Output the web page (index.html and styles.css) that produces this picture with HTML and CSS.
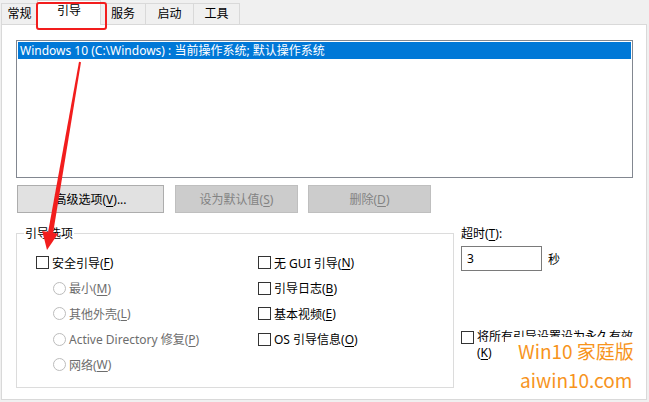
FILE: index.html
```html
<!DOCTYPE html>
<html lang="zh-CN">
<head>
<meta charset="UTF-8">
<title>系统配置 - 引导</title>
<link rel="stylesheet" href="styles.css">
</head>
<body>
<div class="tabs">
  <div class="tab tab-general">常规</div>
  <div class="tab tab-boot active">引导</div>
  <div class="tab tab-services">服务</div>
  <div class="tab tab-startup">启动</div>
  <div class="tab tab-tools">工具</div>
</div>

<div class="panel">
  <div class="os-list">
    <div class="os-item selected">Windows 10 (C:\Windows) : 当前操作系统; 默认操作系统</div>
  </div>

  <div class="buttons">
    <button class="btn btn-advanced">高级选项(<u>V</u>)...</button>
    <button class="btn btn-default" disabled>设为默认值(<u>S</u>)</button>
    <button class="btn btn-delete" disabled>删除(<u>D</u>)</button>
  </div>

  <div class="lower">
    <fieldset class="boot-options">
      <legend>引导选项</legend>
      <div class="options-grid">
        <label class="opt check-opt"><span class="box"></span>安全引导(<u>F</u>)</label>
        <label class="opt check-opt"><span class="box"></span>无 GUI 引导(<u>N</u>)</label>

        <label class="opt radio-opt"><span class="radio"></span>最小(<u>M</u>)</label>
        <label class="opt check-opt"><span class="box"></span>引导日志(<u>B</u>)</label>

        <label class="opt radio-opt"><span class="radio"></span>其他外壳(<u>L</u>)</label>
        <label class="opt check-opt"><span class="box"></span>基本视频(<u>E</u>)</label>

        <label class="opt radio-opt"><span class="radio"></span>Active Directory 修复(<u>P</u>)</label>
        <label class="opt check-opt"><span class="box"></span>OS 引导信息(<u>O</u>)</label>

        <label class="opt radio-opt"><span class="radio"></span>网络(<u>W</u>)</label>
      </div>
    </fieldset>

    <div class="side">
      <div class="timeout-label">超时(<u>T</u>):</div>
      <div class="timeout-row">
        <div class="timeout-input">3</div>
        <span class="unit">秒</span>
      </div>
      <label class="permanent"><span class="box"></span><span class="permanent-text">将所有引导设置设为永久有效(<u>K</u>)</span></label>
    </div>
  </div>
</div>

<!-- annotations on top of the screenshot -->
<div class="mark-box"></div>
<svg class="mark-arrow" width="649" height="402" viewBox="0 0 649 402">
  <polygon points="79,61.8 81,62.2 53,233.4 48,232.6" fill="#f21d1d"/>
  <polygon points="42.2,230.9 58,233.7 47,250" fill="#f21d1d"/>
</svg>

<div class="watermark">
  <div class="wm-title">Win10 家庭版</div>
  <div class="wm-site">aiwin10.com</div>
</div>
</body>
</html>
```

FILE: styles.css
```css
:root {
  --panel-border: #d9d9d9;
  --face: #f0f0f0;
  --text: #000;
  --disabled: #6d6d6d;
  --select: #0078d7;
  --mark: #f21d1d;
  --orange: #f7941d;
}

* {
  margin: 0;
  padding: 0;
  box-sizing: border-box;
}

body {
  width: 649px;
  height: 402px;
  overflow: hidden;
  background: var(--face);
  font-family: "Noto Sans", "Noto Sans CJK SC", sans-serif;
  font-size: 12px;
  color: var(--text);
}

u {
  text-decoration: underline;
  text-underline-offset: 2px;
}

/* tabs */
.tabs {
  display: flex;
  align-items: flex-end;
  height: 24px;
  padding-left: 1px;
}

.tab {
  height: 21px;
  line-height: 20px;
  border: 1px solid var(--panel-border);
  border-bottom: none;
  background: var(--face);
  text-align: center;
  margin-left: -1px;
}

.tab:first-child {
  margin-left: 0;
}

.tab-general { width: 37px; }
.tab-boot { width: 64px; }
.tab-services { width: 46px; }
.tab-startup { width: 49px; }
.tab-tools { width: 47px; }

.tab.active {
  position: relative;
  z-index: 1;
  height: 25px;
  line-height: 20px;
  margin-bottom: -1px;
  background: #fff;
}

/* tab page */
.panel {
  margin-left: 1px;
  width: 646px;
  height: 376px;
  background: #fff;
  border: 1px solid var(--panel-border);
}

.os-list {
  margin: 15px 0 0 14px;
  width: 617px;
  height: 138px;
  border: 1px solid #828790;
  padding: 1px;
}

.os-item {
  height: 17px;
  line-height: 17px;
  padding-left: 2px;
  white-space: nowrap;
}

.os-item.selected {
  background: var(--select);
  color: #fff;
}

.buttons {
  display: flex;
  margin-top: 7px;
  padding-left: 15px;
}

.btn {
  height: 28px;
  font: inherit;
  border: 1px solid #adadad;
  background: #e1e1e1;
  color: var(--text);
}

.btn:disabled {
  border-color: #bfbfbf;
  background: #cccccc;
  color: #838383;
}

.btn-advanced { width: 147px; }
.btn-default { width: 123px; margin-left: 11px; }
.btn-delete { width: 123px; margin-left: 10px; }

.lower {
  display: flex;
  margin-top: 12px;
}

/* boot options group */
.boot-options {
  margin-left: 14px;
  width: 438px;
  height: 163px;
  border: 1px solid #dcdcdc;
  padding: 8px 0 0 7px;
}

.boot-options legend {
  padding: 0 1px;
  line-height: 17px;
}

.options-grid {
  display: grid;
  grid-template-columns: 222px 1fr;
  grid-auto-rows: 25.5px;
  padding-left: 12px;
}

.opt {
  display: flex;
  align-items: center;
  white-space: nowrap;
}

.box {
  width: 13px;
  height: 13px;
  border: 1px solid #333;
  background: #fff;
  margin-right: 3px;
  flex: none;
}

.radio-opt {
  padding-left: 17px;
  color: var(--disabled);
}

.radio {
  width: 13px;
  height: 13px;
  border: 1px solid #bcbcbc;
  border-radius: 50%;
  margin-right: 3px;
  flex: none;
}

/* right side */
.side {
  margin-left: 7px;
}

.timeout-label {
  line-height: 17px;
}

.timeout-row {
  display: flex;
  align-items: center;
  margin-top: 4px;
}

.timeout-input {
  width: 81px;
  height: 25px;
  border: 1px solid #7a7a7a;
  line-height: 23px;
  padding-left: 5px;
}

.unit {
  margin-left: 6px;
}

.permanent {
  display: flex;
  align-items: flex-start;
  margin-top: 58px;
  line-height: 16px;
}

.permanent .box {
  margin-top: 2px;
}

.permanent-text {
  width: 158px;
}

/* annotations */
.mark-box {
  position: absolute;
  left: 36px;
  top: 2px;
  width: 71px;
  height: 28px;
  border: 2px solid var(--mark);
  border-radius: 3px;
  z-index: 2;
}

.mark-arrow {
  position: absolute;
  left: 0;
  top: 0;
  z-index: 2;
  pointer-events: none;
}

.watermark {
  position: absolute;
  left: 505px;
  top: 337px;
  width: 135px;
  height: 60px;
  background: #fff;
  color: var(--orange);
  font-family: "Noto Sans CJK SC", sans-serif;
  font-size: 19px;
  z-index: 2;
}

.wm-title {
  line-height: 28px;
  padding-left: 13px;
}

.wm-site {
  line-height: 30px;
  padding-left: 15px;
}
```
